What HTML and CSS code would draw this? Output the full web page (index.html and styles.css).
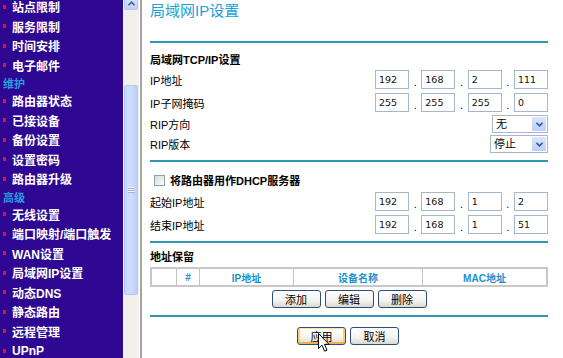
FILE: index.html
```html
<!DOCTYPE html>
<html lang="zh-CN">
<head>
  <meta charset="UTF-8">
  <title>局域网IP设置</title>
  <link rel="stylesheet" href="styles.css">
</head>
<body>
  <div class="page">
    <nav class="menu">
      <ul class="menu-list">
        <li class="item">站点限制</li>
        <li class="item">服务限制</li>
        <li class="item">时间安排</li>
        <li class="item">电子邮件</li>
        <li class="group">维护</li>
        <li class="item">路由器状态</li>
        <li class="item">已接设备</li>
        <li class="item">备份设置</li>
        <li class="item">设置密码</li>
        <li class="item">路由器升级</li>
        <li class="group">高级</li>
        <li class="item">无线设置</li>
        <li class="item">端口映射/端口触发</li>
        <li class="item">WAN设置</li>
        <li class="item">局域网IP设置</li>
        <li class="item">动态DNS</li>
        <li class="item">静态路由</li>
        <li class="item">远程管理</li>
        <li class="item">UPnP</li>
      </ul>
    </nav>

    <div class="scrollbar">
      <div class="sb-up">
        <svg width="7" height="5" viewBox="0 0 7 5"><path d="M0.5 4.2 L3.5 1.2 L6.5 4.2" stroke="#4d6185" stroke-width="1.6" fill="none"/></svg>
      </div>
      <div class="sb-thumb"><span class="grip"></span></div>
    </div>
    <div class="frame-edge"></div>

    <main class="content">
      <h1 class="title">局域网IP设置</h1>
      <div class="rule"></div>

      <div class="sec-head">局域网TCP/IP设置</div>
      <div class="row">
        <span class="label">IP地址</span>
        <div class="ip">
          <input class="oct" value="192"><span class="dot">.</span>
          <input class="oct" value="168"><span class="dot">.</span>
          <input class="oct" value="2"><span class="dot">.</span>
          <input class="oct" value="111">
        </div>
      </div>
      <div class="row">
        <span class="label">IP子网掩码</span>
        <div class="ip">
          <input class="oct" value="255"><span class="dot">.</span>
          <input class="oct" value="255"><span class="dot">.</span>
          <input class="oct" value="255"><span class="dot">.</span>
          <input class="oct" value="0">
        </div>
      </div>
      <div class="row row-sel">
        <span class="label">RIP方向</span>
        <div class="select sel-dir">
          <span class="sel-text">无</span>
          <span class="sel-btn"><svg width="7" height="5" viewBox="0 0 7 5"><path d="M0.5 0.8 L3.5 3.8 L6.5 0.8" stroke="#3c5a9a" stroke-width="1.6" fill="none"/></svg></span>
        </div>
      </div>
      <div class="row row-sel">
        <span class="label">RIP版本</span>
        <div class="select sel-ver">
          <span class="sel-text">停止</span>
          <span class="sel-btn"><svg width="7" height="5" viewBox="0 0 7 5"><path d="M0.5 0.8 L3.5 3.8 L6.5 0.8" stroke="#3c5a9a" stroke-width="1.6" fill="none"/></svg></span>
        </div>
      </div>
      <div class="rule rule-mid"></div>

      <div class="sec-head dhcp-head">
        <span class="check"></span>将路由器用作DHCP服务器
      </div>
      <div class="row">
        <span class="label">起始IP地址</span>
        <div class="ip">
          <input class="oct" value="192"><span class="dot">.</span>
          <input class="oct" value="168"><span class="dot">.</span>
          <input class="oct" value="1"><span class="dot">.</span>
          <input class="oct" value="2">
        </div>
      </div>
      <div class="row">
        <span class="label">结束IP地址</span>
        <div class="ip">
          <input class="oct" value="192"><span class="dot">.</span>
          <input class="oct" value="168"><span class="dot">.</span>
          <input class="oct" value="1"><span class="dot">.</span>
          <input class="oct" value="51">
        </div>
      </div>
      <div class="rule rule-res"></div>

      <div class="sec-head res-head">地址保留</div>
      <table class="res-table">
        <tr>
          <th class="c-sel"></th>
          <th class="c-num">#</th>
          <th class="c-ip">IP地址</th>
          <th class="c-name">设备名称</th>
          <th class="c-mac">MAC地址</th>
        </tr>
      </table>
      <div class="btn-row">
        <button class="btn">添加</button>
        <button class="btn">编辑</button>
        <button class="btn">删除</button>
      </div>
      <div class="rule rule-end"></div>

      <div class="btn-row actions">
        <button class="btn btn-hover">应用</button>
        <button class="btn">取消</button>
      </div>

      <svg class="cursor" width="13" height="20" viewBox="0 0 13 20">
        <path d="M0.5 0.5 L0.5 15.5 L4 12.2 L6.6 18.2 L9 17.2 L6.5 11.3 L11 11.3 Z" fill="#fff" stroke="#000" stroke-width="1" stroke-linejoin="round"/>
      </svg>
    </main>
  </div>
</body>
</html>
```

FILE: styles.css
```css
body {
  margin: 0;
  font-family: "Liberation Sans", "Noto Sans CJK SC", sans-serif;
  background: #fff;
}

.page {
  display: flex;
  height: 358px;
  overflow: hidden;
}

/* left menu */
.menu {
  width: 123px;
  flex: none;
  background-color: #2e0792;
  overflow: hidden;
}

.menu-list {
  list-style: none;
  margin: -3px 0 0 0;
  padding: 0;
}

.item {
  height: 19.5px;
  display: flex;
  align-items: center;
  padding-left: 3px;
  color: #fff;
  font-size: 12px;
  font-weight: bold;
  white-space: nowrap;
}

.item::before {
  content: "";
  width: 3px;
  height: 4px;
  margin-right: 6px;
  background-color: #d4174a;
}

.group {
  height: 16px;
  display: flex;
  align-items: center;
  padding-left: 3px;
  color: #2a9be0;
  font-size: 11px;
  font-weight: bold;
}

/* scrollbar */
.scrollbar {
  width: 16px;
  flex: none;
  background-color: #f1f0ea;
  display: flex;
  flex-direction: column;
  align-items: center;
}

.sb-up {
  width: 14px;
  height: 16px;
  margin-top: -6px;
  box-sizing: border-box;
  border: 1px solid #b5c8f3;
  border-radius: 2px;
  background: linear-gradient(#dbe6fd, #c0d2fa);
  display: flex;
  justify-content: center;
  align-items: flex-start;
  padding-top: 6px;
}

.sb-thumb {
  width: 14px;
  height: 210px;
  margin-top: 75px;
  box-sizing: border-box;
  border: 1px solid #b4c6f2;
  border-radius: 2px;
  background: linear-gradient(90deg, #c6d6fc, #cedcfd 50%, #bccffa);
  display: flex;
  justify-content: center;
  align-items: center;
}

.grip {
  width: 7px;
  height: 6px;
  background: repeating-linear-gradient(#eef3ff 0 1px, #9fb4e3 1px 2px);
}

.frame-edge {
  width: 3px;
  flex: none;
  border-left: 1px solid #fff;
  background-color: #a4a4a0;
  box-sizing: border-box;
}

/* content */
.content {
  position: relative;
  flex: 1;
  padding: 0 15px 0 8px;
  font-size: 11px;
  color: #000;
}

.title {
  margin: 0;
  height: 22px;
  line-height: 22px;
  font-size: 15px;
  font-weight: normal;
  color: #22a0d8;
}

.rule {
  height: 2px;
  background-color: #3098b4;
  margin-top: 19px;
}

.rule-mid {
  margin-top: 6px;
}

.rule-res {
  margin-top: 5px;
}

.rule-end {
  margin-top: 7px;
}

.sec-head {
  height: 19px;
  margin-top: 6px;
  display: flex;
  align-items: center;
  font-weight: bold;
}

.dhcp-head {
  height: 20px;
  margin-top: 8px;
  padding-left: 4px;
}

.res-head {
  height: 18px;
  margin-top: 4px;
}

.check {
  width: 11px;
  height: 11px;
  box-sizing: border-box;
  margin-right: 5px;
  border: 1px solid #8c9fb8;
  background: linear-gradient(135deg, #dcdcd6, #fbfbf8);
}

.row {
  height: 23px;
  display: flex;
  justify-content: space-between;
  align-items: center;
}

.row-sel {
  height: 20px;
}

.ip {
  width: 173px;
  display: flex;
  justify-content: space-between;
  align-items: center;
}

.oct {
  width: 34px;
  height: 19px;
  box-sizing: border-box;
  margin: 0;
  padding: 0 0 0 3px;
  border: 1px solid #a5b7cc;
  font-family: "DejaVu Sans", sans-serif;
  font-size: 9.5px;
  color: #111;
  background: #fff;
}

.dot {
  font-size: 11px;
  line-height: 1;
  padding-top: 5px;
}

.select {
  height: 18px;
  box-sizing: border-box;
  border: 1px solid #a5b7cc;
  display: flex;
  align-items: stretch;
  background: #fff;
}

.sel-dir {
  width: 56px;
}

.sel-ver {
  width: 58px;
}

.sel-text {
  flex: 1;
  padding-left: 3px;
  font-size: 11px;
  line-height: 16px;
}

.sel-btn {
  width: 14px;
  margin: 1px;
  border-radius: 1px;
  background: linear-gradient(#dae5fd, #bccef8);
  display: flex;
  justify-content: center;
  align-items: center;
}

.res-table {
  width: 398px;
  height: 20px;
  margin-top: 2px;
  border-collapse: collapse;
  border: 2px solid #c8c8c8;
}

.res-table th {
  border: 1px solid #c4c4c4;
  padding: 0;
  font-size: 10px;
  font-weight: bold;
  color: #1b8fd0;
  text-align: center;
}

.c-sel { width: 24px; }
.c-num { width: 22px; }
.c-ip { width: 93px; }
.c-name { width: 128px; }

.btn-row {
  display: flex;
  justify-content: center;
  gap: 4px;
  margin-top: 3px;
}

.actions {
  margin-top: 10px;
  padding-right: 2px;
}

.btn {
  width: 49px;
  height: 18px;
  padding: 0;
  box-sizing: border-box;
  border: 1px solid #2c4f7c;
  border-radius: 3px;
  background: linear-gradient(#ffffff, #f4f3ee 60%, #dcd8cc);
  font-family: "Liberation Sans", "Noto Sans CJK SC", sans-serif;
  font-size: 11px;
  color: #000;
}

.btn-hover {
  box-shadow: inset 0 1px 0 #fde3a6, inset 0 -2px 0 #f0b24a, inset 2px 0 0 #f8cc70, inset -2px 0 0 #f8cc70;
}

.cursor {
  position: absolute;
  left: 176px;
  top: 333px;
}
```
